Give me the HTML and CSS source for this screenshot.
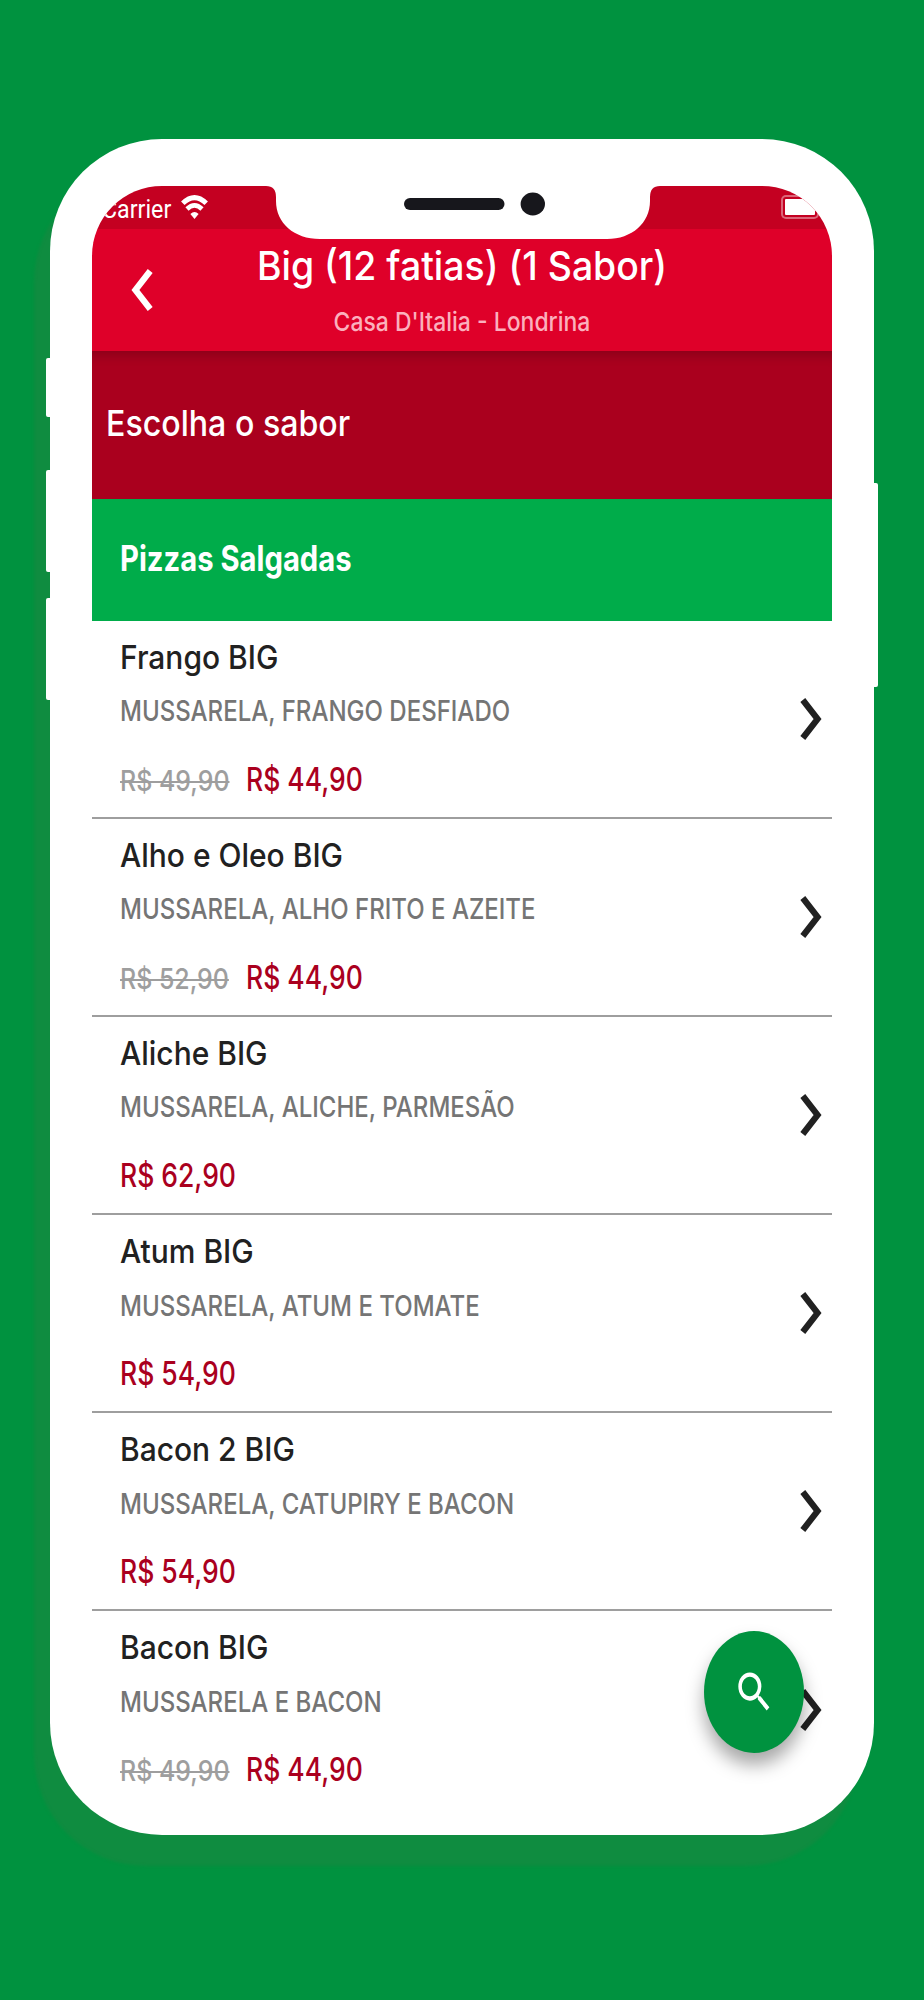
FILE: index.html
```
<!DOCTYPE html>
<html lang="pt-BR">
<head>
    <meta charset="UTF-8">
    <meta name="viewport" content="width=device-width, initial-scale=1.0">
    <title>Escolha o sabor | Casa D'Italia</title>
    <link rel="stylesheet" href="styles.css">
</head>
<body>

    <svg class="sprite" aria-hidden="true">
        <symbol id="chevron" viewBox="0 0 22 44" preserveAspectRatio="none">
            <path d="M2.8 3 L17.6 22 L2.8 41" fill="none" stroke="currentColor" stroke-width="6.2"/>
        </symbol>
    </svg>

    <div class="phone">
        <!-- Botões laterais -->
        <span class="side-button mute"></span>
        <span class="side-button volume-up"></span>
        <span class="side-button volume-down"></span>
        <span class="side-button power"></span>

        <div class="screen">
            <div class="status-bar">
                <span class="carrier">Carrier</span>
                <svg class="wifi" viewBox="0 0 27 24">
                    <path d="M1.8 8.3 Q13.5 -3 25.2 8.3" fill="none" stroke="#fff" stroke-width="5"/>
                    <path d="M6 14 Q13.5 6.8 21 14" fill="none" stroke="#fff" stroke-width="4.6"/>
                    <path d="M9.4 19 Q13.5 14.8 17.6 19 L13.5 24 Z" fill="#fff"/>
                </svg>
                <span class="battery"></span>
            </div>

            <header class="header">
                <svg class="back"><use href="#chevron"/></svg>
                <div class="header-text">
                    <h1 class="title">Big (12 fatias) (1 Sabor)</h1>
                    <p class="subtitle">Casa D'Italia - Londrina</p>
                </div>
            </header>

            <div class="step"><h2 class="step-title">Escolha o sabor</h2></div>
            <div class="category"><h3 class="category-title">Pizzas Salgadas</h3></div>

            <!-- Lista de sabores -->
            <ul class="flavors">
                <li class="flavor">
                    <div class="info">
                        <h4 class="name">Frango BIG</h4>
                        <p class="description">MUSSARELA, FRANGO DESFIADO</p>
                        <p class="prices"><span class="old"><s>R$ 49,90</s></span><span class="price">R$ 44,90</span></p>
                    </div>
                    <svg class="arrow"><use href="#chevron"/></svg>
                </li>
                <li class="flavor">
                    <div class="info">
                        <h4 class="name">Alho e Oleo BIG</h4>
                        <p class="description">MUSSARELA, ALHO FRITO E AZEITE</p>
                        <p class="prices"><span class="old"><s>R$ 52,90</s></span><span class="price">R$ 44,90</span></p>
                    </div>
                    <svg class="arrow"><use href="#chevron"/></svg>
                </li>
                <li class="flavor">
                    <div class="info">
                        <h4 class="name">Aliche BIG</h4>
                        <p class="description">MUSSARELA, ALICHE, PARMESÃO</p>
                        <p class="prices"><span class="price">R$ 62,90</span></p>
                    </div>
                    <svg class="arrow"><use href="#chevron"/></svg>
                </li>
                <li class="flavor">
                    <div class="info">
                        <h4 class="name">Atum BIG</h4>
                        <p class="description">MUSSARELA, ATUM E TOMATE</p>
                        <p class="prices"><span class="price">R$ 54,90</span></p>
                    </div>
                    <svg class="arrow"><use href="#chevron"/></svg>
                </li>
                <li class="flavor">
                    <div class="info">
                        <h4 class="name">Bacon 2 BIG</h4>
                        <p class="description">MUSSARELA, CATUPIRY E BACON</p>
                        <p class="prices"><span class="price">R$ 54,90</span></p>
                    </div>
                    <svg class="arrow"><use href="#chevron"/></svg>
                </li>
                <li class="flavor">
                    <div class="info">
                        <h4 class="name">Bacon BIG</h4>
                        <p class="description">MUSSARELA E BACON</p>
                        <p class="prices"><span class="old"><s>R$ 49,90</s></span><span class="price">R$ 44,90</span></p>
                    </div>
                    <svg class="arrow"><use href="#chevron"/></svg>
                </li>
            </ul>

            <button class="search" aria-label="Buscar">
                <svg class="search-icon" viewBox="0 0 24 24" preserveAspectRatio="none">
                    <path fill="#fff" d="M15.5 14h-.79l-.28-.27A6.471 6.471 0 0 0 16 9.5 6.5 6.5 0 1 0 9.5 16c1.61 0 3.09-.59 4.23-1.57l.27.28v.79l5 4.99L20.49 19l-4.99-5zm-6 0C7.01 14 5 11.99 5 9.5S7.01 5 9.5 5 14 7.01 14 9.5 11.99 14 9.5 14z"/>
                </svg>
            </button>
        </div>

        <!-- Recorte da câmera -->
        <svg class="notch" viewBox="0 0 394 55">
            <path d="M0 0 V1 Q10 1 10 12 V16 C10 38 28 54 54 54 H341 C366 54 384 38 384 16 V12 Q384 1 394 1 V0 Z" fill="#fff"/>
            <rect x="138" y="13" width="100.5" height="12" rx="6" fill="#17171c"/>
            <ellipse cx="266.8" cy="19" rx="12.2" ry="11.4" fill="#17171c"/>
        </svg>
    </div>

</body>
</html>
```
FILE: styles.css
```
* {
    box-sizing: border-box;
    margin: 0;
    padding: 0;
}

body {
    height: 2000px;
    padding: 139px 50px 0;
    background: #00923f;
    font-family: Inter, sans-serif;
    overflow: hidden;
}

.sprite {
    position: absolute;
    width: 0;
    height: 0;
}

/* Aparelho */
.phone {
    position: relative;
    width: 824px;
    height: 1695.5px;
    padding: 46.5px 42px;
    background: #fff;
    border-radius: 112px;
    box-shadow: -16px 31px 3px #0f8c40;
}

.side-button {
    position: absolute;
    left: -4px;
    width: 5px;
    height: 102px;
    background: #fff;
    border-radius: 2px 0 0 2px;
}

.mute { top: 218.5px; height: 59.5px; }
.volume-up { top: 331px; }
.volume-down { top: 459px; }

.power {
    top: 344px;
    left: auto;
    right: -4px;
    height: 203.5px;
    border-radius: 0 2px 2px 0;
}

.notch {
    position: absolute;
    top: 46px;
    left: 216px;
    width: 394px;
    height: 55px;
}

/* Tela */
.screen {
    position: relative;
    height: 1620px;
    background: #fff;
    border-radius: 70px 70px 0 0;
    overflow: hidden;
}

.status-bar {
    display: flex;
    align-items: flex-start;
    height: 43.5px;
    padding: 9.5px 13px 0 10px;
    background: #c40021;
    color: #fff;
}

.carrier {
    width: 79px;
    font-family: Roboto, sans-serif;
    font-size: 25.5px;
    line-height: 28px;
    transform: scaleX(.91);
    transform-origin: left;
}

.wifi {
    width: 27px;
    height: 24px;
}

.battery {
    width: 38px;
    height: 24px;
    margin-left: auto;
    border: 2px solid rgba(255, 255, 255, .4);
    border-radius: 5px;
    background: #fff content-box;
    padding: 2px;
}

/* Cabeçalho */
.header {
    display: flex;
    align-items: center;
    height: 122px;
    padding: 0 39px;
    background: #df0029;
    color: #fff;
}

.back {
    width: 22px;
    height: 44px;
    transform: scaleX(-1);
}

.header-text {
    flex: 1;
    align-self: flex-start;
    margin-right: 22px;
    padding-top: 11px;
    text-align: center;
    white-space: nowrap;
}

.title {
    font-size: 40px;
    font-weight: 500;
    line-height: 52px;
    transform: scaleX(.935);
}

.subtitle {
    margin-top: 10px;
    font-size: 26px;
    font-weight: 500;
    line-height: 40px;
    color: #fbb0bd;
    transform: scaleX(.883);
}

.step {
    height: 147.5px;
    padding: 45px 14px 0;
    background: #aa001e;
    box-shadow: inset 0 14px 12px -10px rgba(0, 0, 0, .2);
    color: #fff;
}

.step-title {
    font-size: 36px;
    font-weight: 500;
    line-height: 54px;
    transform: scaleX(.893);
    transform-origin: left;
}

.category {
    height: 122px;
    padding: 35px 28px 0;
    background: #00ac4a;
    color: #fff;
}

.category-title {
    font-size: 35px;
    font-weight: 700;
    line-height: 48px;
    transform: scaleX(.834);
    transform-origin: left;
}

/* Sabores */
.flavors {
    list-style: none;
}

.flavor {
    display: flex;
    align-items: center;
    justify-content: space-between;
    height: 198.2px;
    padding: 0 10px 0 28px;
    border-bottom: 2px solid #9e9e9e;
    white-space: nowrap;
}

.flavor:last-child {
    border-bottom-color: transparent;
}

.info {
    align-self: flex-start;
    padding-top: 16px;
}

.name {
    font-size: 33px;
    font-weight: 450;
    line-height: 40px;
    color: #212121;
    transform: scaleX(.908);
    transform-origin: left;
}

.description {
    margin-top: 16.5px;
    font-size: 29px;
    font-weight: 450;
    line-height: 36px;
    color: #757575;
    transform: scaleX(.828);
    transform-origin: left;
}

.prices {
    display: flex;
    align-items: baseline;
    margin-top: 30.5px;
    line-height: 40px;
}

.old {
    width: 126px;
    font-size: 29px;
    font-weight: 450;
    color: #9e9e9e;
    transform: scaleX(.86);
    transform-origin: left;
}

.old s {
    text-decoration-thickness: 2px;
}

.price {
    font-size: 32px;
    font-weight: 500;
    color: #aa001e;
    transform: scaleX(.828);
    transform-origin: left;
}

.arrow {
    width: 22px;
    height: 44px;
    color: #212121;
}

/* Botão de busca */
.search {
    position: absolute;
    top: 1445.5px;
    right: 28px;
    display: flex;
    align-items: center;
    justify-content: center;
    width: 100px;
    height: 122px;
    border: none;
    border-radius: 50%;
    background: #00923f;
    box-shadow: 0 12px 18px rgba(0, 0, 0, .35);
}

.search-icon {
    width: 42.6px;
    height: 52px;
}
```
